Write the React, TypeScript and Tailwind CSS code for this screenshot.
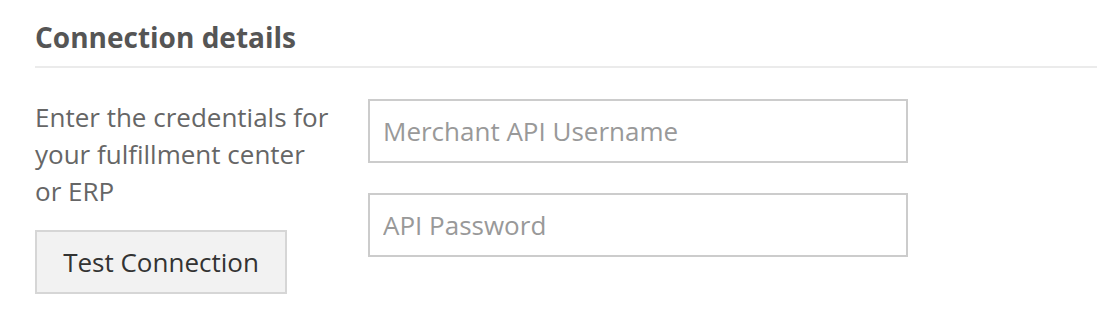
export default function App() {
  return (
    <div className="w-[1097px] h-[316px] bg-white pl-[35px] pt-[18px]" style={{ fontFamily: '"Open Sans", sans-serif' }}>
      <h2 className="text-[28px] leading-[38px] font-bold text-[#555555]">Connection details</h2>
      <div className="mt-[10px] h-[2px] bg-[#ebebeb]" />
      <div className="flex mt-[31px]">
        <div className="w-[333px] shrink-0 pr-[34px]">
          <p className="text-[26px] leading-[37px] text-[#666666]">
            Enter the credentials for your fulfillment center or ERP
          </p>
          <button className="mt-[20px] w-[252px] h-[64px] bg-[#f2f2f2] border-2 border-[#d6d6d6] text-[26px] text-[#333333]">
            Test Connection
          </button>
        </div>
        <div className="flex flex-col gap-[30px]">
          <input
            placeholder="Merchant API Username"
            className="w-[540px] h-[64px] border-2 border-[#cccccc] px-[13px] text-[26px] text-[#333333] placeholder:text-[#999999] outline-none"
          />
          <input
            placeholder="API Password"
            type="password"
            className="w-[540px] h-[64px] border-2 border-[#cccccc] px-[13px] text-[26px] text-[#333333] placeholder:text-[#999999] outline-none"
          />
        </div>
      </div>
    </div>
  );
}
